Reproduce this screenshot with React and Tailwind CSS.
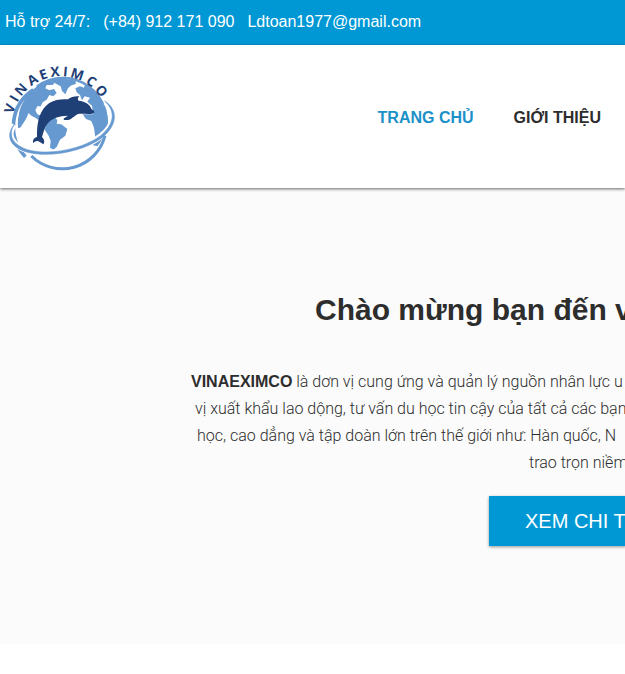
const ARC = { cx: 182, cy: 208, r: 146, size: 41 };

// letter, angle from the top of the arc, advance width in em
const LETTERS = [
  ['V', -72, 0.65],
  ['I', -60, 0.33],
  ['N', -48, 0.81],
  ['A', -32, 0.69],
  ['E', -19, 0.56],
  ['X', -6, 0.67],
  ['I', 5, 0.33],
  ['M', 18, 0.94],
  ['C', 35, 0.64],
  ['O', 50, 0.8],
];

const placed = LETTERS.map(([, angle, width]) => {
  const a = (angle * Math.PI) / 180;
  const half = (width * ARC.size) / 2;
  return {
    x: Math.round(ARC.cx + ARC.r * Math.sin(a) - half * Math.cos(a)),
    y: Math.round(ARC.cy - ARC.r * Math.cos(a) - half * Math.sin(a)),
    angle,
  };
});

function Logo() {
  return (
    <svg viewBox="0 4 360 360" className="size-[120px]" role="img" aria-label="VINAEXIMCO">
      <defs>
        <clipPath id="globe">
          <circle cx="187" cy="203" r="134" />
        </clipPath>
      </defs>
      <g clipPath="url(#globe)" fill="#6699d0">
        <path d="M60 150 L100 95 L135 80 L150 74 L165 80 L158 88 L140 88 L136 98 L148 104 L162 100 L170 112 L160 122 L148 118 L140 132 L128 140 L122 152 L112 152 L106 164 L112 176 L124 180 L120 196 L106 186 L94 180 L86 172 L78 190 L62 215 L50 220 Z" />
        <path d="M150 72 L190 64 L226 74 L228 84 L212 90 L204 98 L196 116 L186 106 L182 92 L168 84 Z" />
        <path d="M226 98 L240 92 L252 96 L256 84 L290 105 L310 135 L324 180 L318 236 L292 272 L276 268 L286 246 L282 216 L274 196 L258 190 L248 176 L280 176 L276 150 L262 138 L270 126 L254 122 L246 134 L240 118 L230 110 Z" />
        <path d="M140 204 L152 188 L164 184 L172 194 L170 204 L184 206 L202 220 L196 240 L180 252 L170 274 L160 282 L150 276 L152 256 L146 240 L134 222 Z" />
      </g>
      <path d="M100 102 A132 132 0 0 0 76 303" fill="none" stroke="#6699d0" strokeWidth="11" />
      <path d="M110 93 A132 132 0 0 1 312 246" fill="none" stroke="#6699d0" strokeWidth="7" />
      <path d="M42 207 C20 238 34 268 82 284 C150 304 252 280 302 242 C346 208 350 166 316 138" fill="none" stroke="#fff" strokeWidth="18" />
      <path d="M94 301 A132 132 0 0 0 315 240" fill="none" stroke="#6699d0" strokeWidth="9" />
      <path d="M42 207 C24 238 36 266 82 282 C150 302 252 278 302 240 C344 206 348 166 314 136 C356 162 352 210 306 246 C252 286 150 308 80 289 C26 272 18 238 42 207 Z" fill="#6699d0" stroke="#6699d0" strokeWidth="2" />
      <path d="M111 244 C110 196 120 162 148 142 C166 131 184 130 204 131 C212 124 224 121 238 122 C233 127 232 132 236 135 C256 137 270 146 275 161 C285 167 286 172 277 174 C262 176 246 173 234 175 C222 181 214 192 204 193 C194 194 188 193 192 188 L204 180 C178 180 154 188 142 204 C132 218 130 232 126 244 C134 252 134 260 130 266 C122 260 116 256 112 256 C106 256 102 260 99 262 C98 252 102 246 111 244 Z" fill="#1f3f77" />
      <text
        x={placed.map((p) => p.x).join(' ')}
        y={placed.map((p) => p.y).join(' ')}
        rotate={placed.map((p) => p.angle).join(' ')}
        fill="#1f3f77"
        fontFamily='"Open Sans", "Noto Sans", sans-serif'
        fontWeight="700"
        fontSize={ARC.size}
      >
        VINAEXIMCO
      </text>
    </svg>
  );
}

export default function App() {
  return (
    <div className="overflow-hidden bg-white font-['Liberation_Sans',Arial,sans-serif] whitespace-nowrap text-[#2d2d2d]">
      <div className="flex h-[45px] items-center gap-[13px] bg-[#0098d4] px-[5px] pb-[2px] text-base text-white">
        <span>Hỗ trợ 24/7:</span>
        <a href="tel:+84912171090">(+84) 912 171 090</a>
        <a href="mailto:Ldtoan1977@gmail.com">Ldtoan1977@gmail.com</a>
      </div>
      <header className="relative flex h-[143px] items-center justify-between bg-white pr-6 shadow-[0_1px_3px_rgba(0,0,0,0.6)]">
        <a href="#home">
          <Logo />
        </a>
        <nav className="flex gap-10 pt-[2px] text-base font-bold">
          <a href="#home" className="text-[#1b91c9]">TRANG CHỦ</a>
          <a href="#about">GIỚI THIỆU</a>
        </nav>
      </header>
      <main className="bg-[#fbfbfb] pt-[97px] pb-[98px]">
        <h1 className="pl-[315px] text-[30px] leading-[50px] font-bold">Chào mừng bạn đến v</h1>
        <div className="pt-[33px] font-[Roboto,sans-serif] text-base leading-[27px] font-light">
          <p className="pl-[191px]">
            <strong className="font-['Liberation_Sans',Arial,sans-serif] font-bold">VINAEXIMCO</strong> là dơn vị cung ứng và quản lý nguồn nhân lực u
          </p>
          <p className="pl-[195px]">vị xuất khẩu lao dộng, tư vấn du học tin cậy của tất cả các bạn</p>
          <p className="pl-[197px]">học, cao dẳng và tập doàn lớn trên thế giới như: Hàn quốc, N</p>
          <p className="pl-[529px]">trao trọn niềm</p>
        </div>
        <button className="mt-5 ml-[489px] block h-[50px] bg-[#0098d4] pl-9 text-xl text-white shadow-[0_1px_3px_rgba(0,0,0,0.4)]">
          XEM CHI T
        </button>
      </main>
    </div>
  );
}
